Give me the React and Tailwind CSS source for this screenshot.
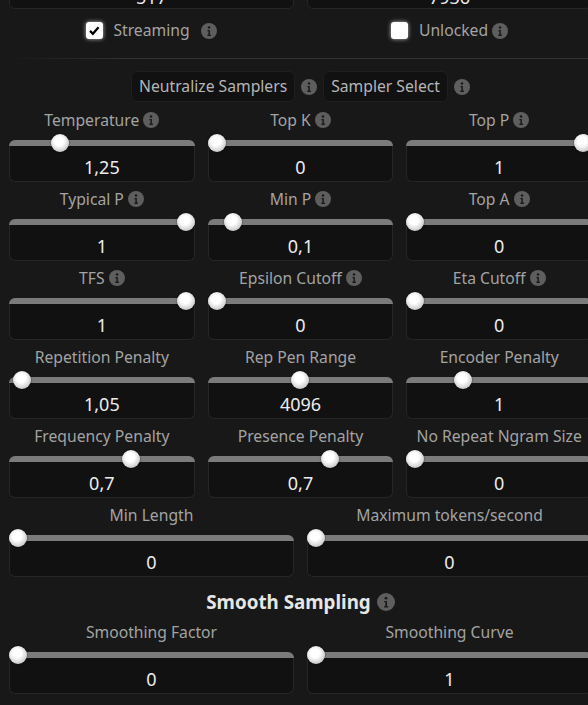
import React from 'react';

const InfoIcon = ({ className = '' }) => (
    <svg className={`w-[16px] h-[16px] shrink-0 ${className}`} viewBox="0 0 16 16">
        <circle cx="8" cy="8" r="8" fill="#5e5e5e" />
        <circle cx="8" cy="4.6" r="1.25" fill="#1b1b1b" />
        <path d="M6.4 7h2.5v4.6h1v1.3H6.4v-1.3h1V8.3h-1z" fill="#1b1b1b" />
    </svg>
);

const Slider = ({ label, value, frac, info }) => (
    <div className="flex flex-col">
        <div className="h-[20px] flex items-center justify-center gap-[4px] text-[15.7px] leading-[20px] text-[#a3a3a3]">
            <span>{label}</span>
            {info && <InfoIcon />}
        </div>
        <div className="relative mt-[10px] h-[42px] flex flex-col">
            <div className="h-[6px] rounded-t-[6px] bg-[#7b7b7b]" />
            <div className="flex-1 pt-[7px] rounded-b-[6px] border border-t-0 border-[#262626] bg-[#111111] flex items-center justify-center text-[18px] text-[#ececec]">
                {value}
            </div>
            <div
                className="absolute top-[-6px] w-[18px] h-[18px] -ml-[9px] rounded-full bg-[radial-gradient(circle_at_45%_40%,#ffffff_30%,#d4d4d4_65%,#9a9a9a_100%)] shadow-[0_0_2px_rgba(0,0,0,0.6)]"
                style={{ left: `calc(9px + ${frac} * (100% - 18px))` }}
            />
        </div>
    </div>
);

const rows3 = [
    ['Temperature', '1,25', 0.25, true],
    ['Top K', '0', 0, true],
    ['Top P', '1', 1, true],
    ['Typical P', '1', 1, true],
    ['Min P', '0,1', 0.095, true],
    ['Top A', '0', 0, true],
    ['TFS', '1', 1, true],
    ['Epsilon Cutoff', '0', 0, true],
    ['Eta Cutoff', '0', 0, true],
    ['Repetition Penalty', '1,05', 0.025, false],
    ['Rep Pen Range', '4096', 0.495, false],
    ['Encoder Penalty', '1', 0.286, false],
    ['Frequency Penalty', '0,7', 0.675, false],
    ['Presence Penalty', '0,7', 0.675, false],
    ['No Repeat Ngram Size', '0', 0, false],
];

export default function App() {
    return (
        <div className="w-[588px] h-[705px] overflow-hidden bg-[#181818] font-['Noto_Sans',sans-serif]">
            <div className="ml-[9px] w-[583px] flex flex-col">
                {/* context / response boxes, mostly scrolled off */}
                <div className="grid grid-cols-2 gap-x-[13px] mt-[-33px]">
                    <div className="h-[42px] rounded-[6px] border border-[#262626] bg-[#111111] pt-[17px] text-center text-[18px] leading-[24px] text-[#ececec]">517</div>
                    <div className="h-[42px] rounded-[6px] border border-[#262626] bg-[#111111] pt-[17px] text-center text-[18px] leading-[24px] text-[#ececec]">7936</div>
                </div>

                <div className="grid grid-cols-2 gap-x-[13px] mt-[10px] h-[20px] text-[15.7px] text-[#a3a3a3]">
                    <div className="flex items-center justify-center">
                        <span className="w-[17px] h-[17px] rounded-[3px] bg-white shadow-[0_0_4px_rgba(255,255,255,0.7)] flex items-center justify-center">
                            <svg viewBox="0 0 16 16" className="w-[13px] h-[13px]">
                                <path d="M2.5 8.5l3.5 3.5 7-8" fill="none" stroke="#000" strokeWidth="2.8" />
                            </svg>
                        </span>
                        <span className="ml-[10px]">Streaming</span>
                        <InfoIcon className="ml-[11px]" />
                    </div>
                    <div className="flex items-center justify-center">
                        <span className="w-[17px] h-[17px] rounded-[3px] bg-white shadow-[0_0_4px_rgba(255,255,255,0.7)]" />
                        <span className="ml-[11px]">Unlocked</span>
                        <InfoIcon className="ml-[4px]" />
                    </div>
                </div>

                <div className="mt-[19px] h-px bg-[linear-gradient(to_right,transparent_0%,#323232_20%,#323232_100%)]" />

                <div className="mt-[12px] flex items-center justify-center gap-[6px] text-[15.7px] text-[#b5b5b5]">
                    <div className="h-[31px] px-[7px] rounded-[6px] bg-[#111111] border border-[#1f1f1f] flex items-center">Neutralize Samplers</div>
                    <InfoIcon />
                    <div className="h-[31px] px-[7px] rounded-[6px] bg-[#111111] border border-[#1f1f1f] flex items-center">Sampler Select</div>
                    <InfoIcon />
                </div>

                <div className="mt-[8px] grid grid-cols-3 gap-x-[13px] gap-y-[7px]">
                    {rows3.map(([l, v, f, i]) => (
                        <Slider key={l} label={l} value={v} frac={f} info={i} />
                    ))}
                </div>

                <div className="mt-[7px] grid grid-cols-2 gap-x-[13px]">
                    <Slider label="Min Length" value="0" frac={0} />
                    <Slider label="Maximum tokens/second" value="0" frac={0} />
                </div>

                <div className="mt-[12px] h-[26px] flex items-center justify-center gap-[6px]">
                    <span className="text-[18.8px] font-bold text-[#e6e6e6]">Smooth Sampling</span>
                    <InfoIcon className="w-[18px] h-[18px]" />
                </div>

                <div className="mt-[7px] grid grid-cols-2 gap-x-[13px]">
                    <Slider label="Smoothing Factor" value="0" frac={0} />
                    <Slider label="Smoothing Curve" value="1" frac={0} />
                </div>
            </div>
        </div>
    );
}
